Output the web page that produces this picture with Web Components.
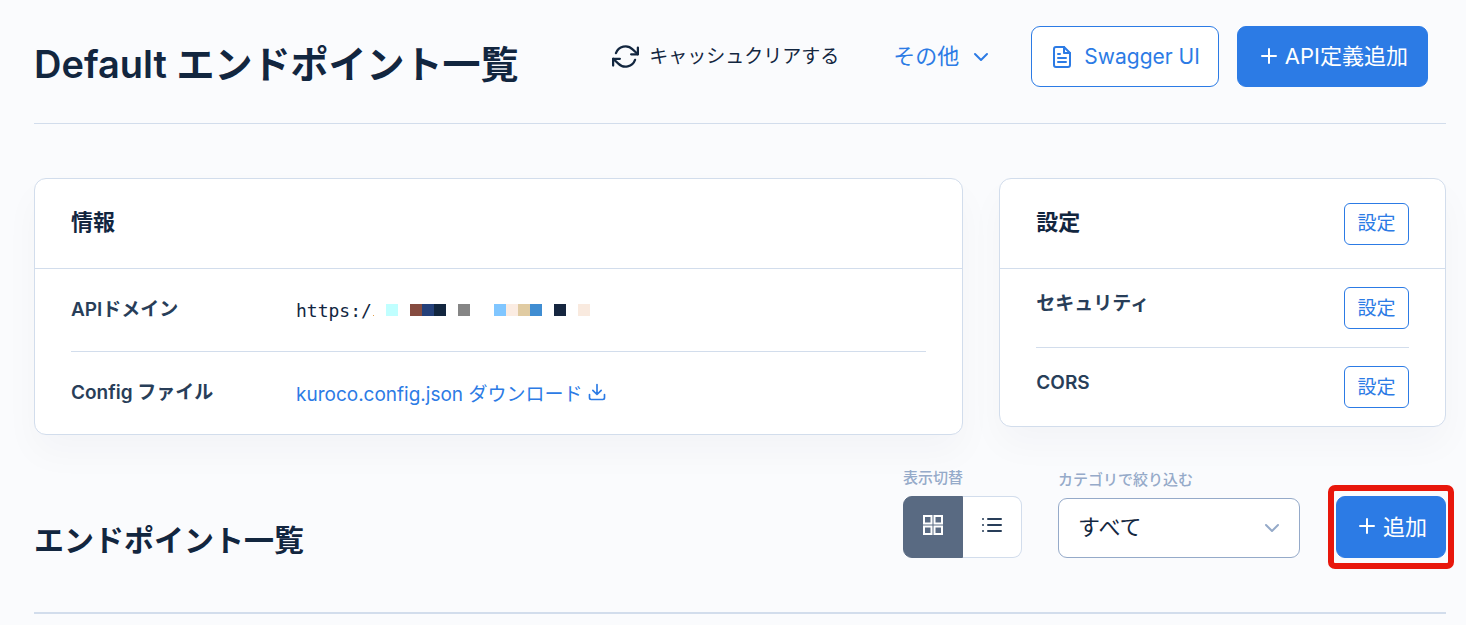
<!DOCTYPE html>
<html lang="ja">
<head>
<meta charset="utf-8">
<meta name="viewport" content="width=device-width, initial-scale=1">
<title>Default エンドポイント一覧</title>
<style>
  body {
    margin: 0;
    background: #fafbfd;
    color: #12263f;
    font-family: Inter, "Noto Sans CJK JP", sans-serif;
    font-size: 19px;
    --blue: #2c7be5;
    --line: #d2ddec;
    --muted: #95aac9;
    --label: #283e59;
  }
</style>
</head>
<body>
<endpoint-page></endpoint-page>

<script>
const icons = {
  plus: `<path d="M12 4v14M5 11h14"/>`,
  file: `<path d="M14 2H6a2 2 0 0 0-2 2v16a2 2 0 0 0 2 2h12a2 2 0 0 0 2-2V8z"/><path d="M14 2v6h6M16 13H8M16 17H8M10 9H8"/>`,
  refresh: `<path d="M23 4v6h-6M1 20v-6h6"/><path d="M3.51 9a9 9 0 0 1 14.85-3.36L23 10M1 14l4.64 4.36A9 9 0 0 0 20.49 15"/>`,
  chevron: `<path d="M6 9l6 6 6-6"/>`,
  download: `<path d="M21 15v4a2 2 0 0 1-2 2H5a2 2 0 0 1-2-2v-4M7 10l5 5 5-5M12 15V3"/>`,
  grid: `<path stroke-linejoin="miter" d="M3 3h7.5v7.5H3zM13.5 3H21v7.5h-7.5zM13.5 13.5H21V21h-7.5zM3 13.5h7.5V21H3z"/>`,
  list: `<path d="M8 6h13M8 12h13M8 18h13M3 6h.01M3 12h.01M3 18h.01"/>`
};

class UiIcon extends HTMLElement {
  constructor() {
    super();
    this.attachShadow({ mode: "open" });
  }

  connectedCallback() {
    this.shadowRoot.innerHTML = `
      <style>
        :host { display: inline-flex; flex: none; width: 24px; height: 24px; }
        svg {
          width: 100%;
          height: 100%;
          fill: none;
          stroke: currentColor;
          stroke-width: 2;
          stroke-linecap: round;
          stroke-linejoin: round;
        }
      </style>
      <svg viewBox="0 0 24 24" aria-hidden="true">${icons[this.getAttribute("name")]}</svg>
    `;
  }
}

class UiButton extends HTMLElement {
  constructor() {
    super();
    this.attachShadow({ mode: "open" }).innerHTML = `
      <style>
        :host { display: inline-flex; flex: none; }
        button {
          display: flex;
          align-items: center;
          justify-content: center;
          gap: 4px;
          height: var(--button-height, 61px);
          padding: 0 18px;
          border: 1px solid var(--blue);
          border-radius: 9px;
          background: #fff;
          color: var(--blue);
          font: inherit;
          font-size: 22px;
          line-height: 33px;
          white-space: nowrap;
          cursor: pointer;
        }
        :host([kind="primary"]) button {
          padding: 0 var(--button-padding, 19px);
          background: var(--blue);
          color: #fff;
        }
        :host([kind="outline"]) button { gap: 10px; font-size: 21px; }
        :host([kind="small"]) button {
          min-width: 65px;
          height: 42px;
          padding: 0 12px;
          border-radius: 6px;
          font-size: 19px;
        }
        :host([kind="plain"]) button {
          gap: 10px;
          padding: 0;
          border: none;
          background: none;
          color: #12263f;
          font-size: 19px;
        }
        :host([kind="menu"]) button {
          gap: 10px;
          padding: 0;
          border: none;
          background: none;
        }
      </style>
      <button type="button"><slot></slot></button>
    `;
  }
}

class PageHeader extends HTMLElement {
  constructor() {
    super();
    this.attachShadow({ mode: "open" }).innerHTML = `
      <style>
        :host { display: block; }
        header {
          display: flex;
          align-items: center;
          justify-content: space-between;
          gap: 18px;
          padding: 26px 18px 36px 0;
          border-bottom: 1px solid var(--line);
        }
        .title { align-self: flex-end; }
        .actions { display: flex; align-items: center; gap: 18px; }
      </style>
      <header>
        <div class="title"><slot name="title"></slot></div>
        <div class="actions"><slot></slot></div>
      </header>
    `;
  }
}

class UiCard extends HTMLElement {
  constructor() {
    super();
    this.attachShadow({ mode: "open" }).innerHTML = `
      <style>
        :host { display: block; }
        section {
          border: 1px solid var(--line);
          border-radius: 12px;
          background: #fff;
          box-shadow: 0 18px 36px rgba(18, 38, 63, 0.03);
        }
        header {
          display: flex;
          align-items: center;
          justify-content: space-between;
          height: 89px;
          padding: 0 36px;
          border-bottom: 1px solid var(--line);
        }
        .body { padding: 0 36px; }
      </style>
      <section>
        <header><slot name="title"></slot><slot name="action"></slot></header>
        <div class="body"><slot></slot></div>
      </section>
    `;
  }
}

class CardRow extends HTMLElement {
  constructor() {
    super();
    this.attachShadow({ mode: "open" }).innerHTML = `
      <style>
        :host {
          display: flex;
          align-items: center;
          min-height: 82px;
          border-bottom: 1px solid var(--line);
        }
        :host(:last-child) { border-bottom: none; }
        :host([split]) {
          align-items: flex-start;
          justify-content: space-between;
          min-height: 42px;
          padding: 18px 0;
        }
        .label {
          flex: none;
          width: 225px;
          color: var(--label);
          font-weight: 600;
          line-height: 34px;
        }
        .value { display: flex; align-items: center; }
      </style>
      <div class="label"><slot name="label"></slot></div>
      <div class="value"><slot></slot></div>
    `;
  }
}

class MaskedUrl extends HTMLElement {
  constructor() {
    super();
    const blocks = [
      [12, "#c0ffff"], [36, "#854b3f"], [48, "#24407a"], [60, "#12263f"],
      [84, "#858585"], [120, "#80c6ff"], [132, "#fbece2"], [144, "#e0cba2"],
      [156, "#3f8dd2"], [180, "#15263f"], [204, "#f9eadf"]
    ];
    this.attachShadow({ mode: "open" }).innerHTML = `
      <style>
        :host { display: flex; align-items: center; }
        code { font-family: "DejaVu Sans Mono", monospace; font-size: 18px; line-height: 27px; }
        svg { width: 218px; height: 12px; }
      </style>
      <code><slot></slot></code>
      <svg viewBox="-2 0 218 12" aria-hidden="true">
        <rect x="-1" y="11" width="1" height="1" fill="#e0a050"/>
        ${blocks.map(([x, fill]) => `<rect x="${x}" width="12" height="12" fill="${fill}"/>`).join("")}
      </svg>
    `;
  }
}

class ViewToggle extends HTMLElement {
  constructor() {
    super();
    this.attachShadow({ mode: "open" }).innerHTML = `
      <style>
        :host { display: block; }
        .caption {
          display: block;
          margin-bottom: 6px;
          color: var(--muted);
          font-size: 15px;
          font-weight: 500;
          line-height: 24px;
        }
        .group { display: flex; }
        button {
          display: flex;
          align-items: center;
          justify-content: center;
          width: 60px;
          height: 62px;
          padding: 0 0 4px;
          border: 1px solid var(--line);
          background: #fff;
          color: var(--label);
          cursor: pointer;
        }
        button:first-child { border-radius: 9px 0 0 9px; }
        button:last-child { width: 59px; border-left: none; border-radius: 0 9px 9px 0; }
        button[aria-pressed="true"] { border-color: #596a82; background: #596a82; color: #fff; }
      </style>
      <span class="caption" id="caption"><slot></slot></span>
      <div class="group" role="group" aria-labelledby="caption">
        <button type="button" aria-label="グリッド" aria-pressed="true"><ui-icon name="grid"></ui-icon></button>
        <button type="button" aria-label="リスト" aria-pressed="false"><ui-icon name="list"></ui-icon></button>
      </div>
    `;
    this.$buttons = this.shadowRoot.querySelectorAll("button");
  }

  connectedCallback() {
    this.$buttons.forEach($button => {
      $button.addEventListener("click", () => {
        this.$buttons.forEach($b => $b.setAttribute("aria-pressed", $b === $button));
      });
    });
  }
}

class CategorySelect extends HTMLElement {
  constructor() {
    super();
    this.attachShadow({ mode: "open" }).innerHTML = `
      <style>
        :host { display: block; }
        label {
          display: block;
          margin-bottom: 6px;
          color: var(--muted);
          font-size: 15px;
          font-weight: 500;
          line-height: 24px;
        }
        .field { position: relative; }
        select {
          appearance: none;
          display: block;
          box-sizing: border-box;
          width: 242px;
          height: 60px;
          padding: 0 48px 2px 19px;
          border: 1px solid var(--muted);
          border-radius: 9px;
          background: #fff;
          color: inherit;
          font: inherit;
          font-size: 22px;
        }
        ui-icon {
          position: absolute;
          top: 18px;
          right: 16px;
          color: var(--muted);
          pointer-events: none;
        }
      </style>
      <label for="category"><slot></slot></label>
      <div class="field">
        <select id="category"><option>すべて</option></select>
        <ui-icon name="chevron"></ui-icon>
      </div>
    `;
  }
}

class EndpointPage extends HTMLElement {
  constructor() {
    super();
    this.attachShadow({ mode: "open" }).innerHTML = `
      <style>
        :host { display: block; padding: 0 20px 0 34px; }
        h1, h2, h3 { margin: 0; font-weight: 600; white-space: nowrap; }
        h1 { font-size: 38px; line-height: 46px; }
        h2 { font-size: 30px; line-height: 36px; }
        h3 { padding-bottom: 2px; font-size: 22px; line-height: 33px; }
        .refresh { width: 27px; height: 27px; }
        .menu { margin: 0 20px 0 36px; }
        .cards {
          display: grid;
          grid-template-columns: minmax(0, 2fr) minmax(0, 1fr);
          align-items: start;
          margin: 54px -18px 0;
        }
        ui-card { margin: 0 18px; }
        a {
          display: flex;
          align-items: center;
          gap: 5px;
          padding-bottom: 2px;
          color: var(--blue);
          text-decoration: none;
        }
        a ui-icon { width: 20px; height: 20px; }
        .list-header {
          display: flex;
          align-items: flex-end;
          justify-content: space-between;
          margin-top: 31px;
          padding-bottom: 54px;
          border-bottom: 2px solid var(--line);
        }
        .filters { display: flex; align-items: flex-end; gap: 36px; }
        .highlight {
          --button-height: 62px;
          --button-padding: 18px;
          position: relative;
          display: flex;
        }
        .highlight::after {
          content: "";
          position: absolute;
          inset: -11px -8px;
          border: 6px solid #e8170c;
          border-radius: 7px;
          pointer-events: none;
        }
      </style>
      <page-header>
        <h1 slot="title">Default エンドポイント一覧</h1>
        <ui-button kind="plain"><ui-icon class="refresh" name="refresh"></ui-icon>キャッシュクリアする</ui-button>
        <ui-button kind="menu" class="menu">その他<ui-icon name="chevron"></ui-icon></ui-button>
        <ui-button kind="outline"><ui-icon name="file"></ui-icon>Swagger UI</ui-button>
        <ui-button kind="primary"><ui-icon name="plus"></ui-icon>API定義追加</ui-button>
      </page-header>
      <div class="cards">
        <ui-card>
          <h3 slot="title">情報</h3>
          <card-row>
            <span slot="label">APIドメイン</span>
            <masked-url>https:/</masked-url>
          </card-row>
          <card-row>
            <span slot="label">Config ファイル</span>
            <a href="#">kuroco.config.json ダウンロード<ui-icon name="download"></ui-icon></a>
          </card-row>
        </ui-card>
        <ui-card>
          <h3 slot="title">設定</h3>
          <ui-button slot="action" kind="small">設定</ui-button>
          <card-row split>
            <span slot="label">セキュリティ</span>
            <ui-button kind="small">設定</ui-button>
          </card-row>
          <card-row split>
            <span slot="label">CORS</span>
            <ui-button kind="small">設定</ui-button>
          </card-row>
        </ui-card>
      </div>
      <div class="list-header">
        <h2>エンドポイント一覧</h2>
        <div class="filters">
          <view-toggle>表示切替</view-toggle>
          <category-select>カテゴリで絞り込む</category-select>
          <div class="highlight">
            <ui-button kind="primary"><ui-icon name="plus"></ui-icon>追加</ui-button>
          </div>
        </div>
      </div>
    `;
  }
}

customElements.define("ui-icon", UiIcon);
customElements.define("ui-button", UiButton);
customElements.define("page-header", PageHeader);
customElements.define("ui-card", UiCard);
customElements.define("card-row", CardRow);
customElements.define("masked-url", MaskedUrl);
customElements.define("view-toggle", ViewToggle);
customElements.define("category-select", CategorySelect);
customElements.define("endpoint-page", EndpointPage);
</script>
</body>
</html>
